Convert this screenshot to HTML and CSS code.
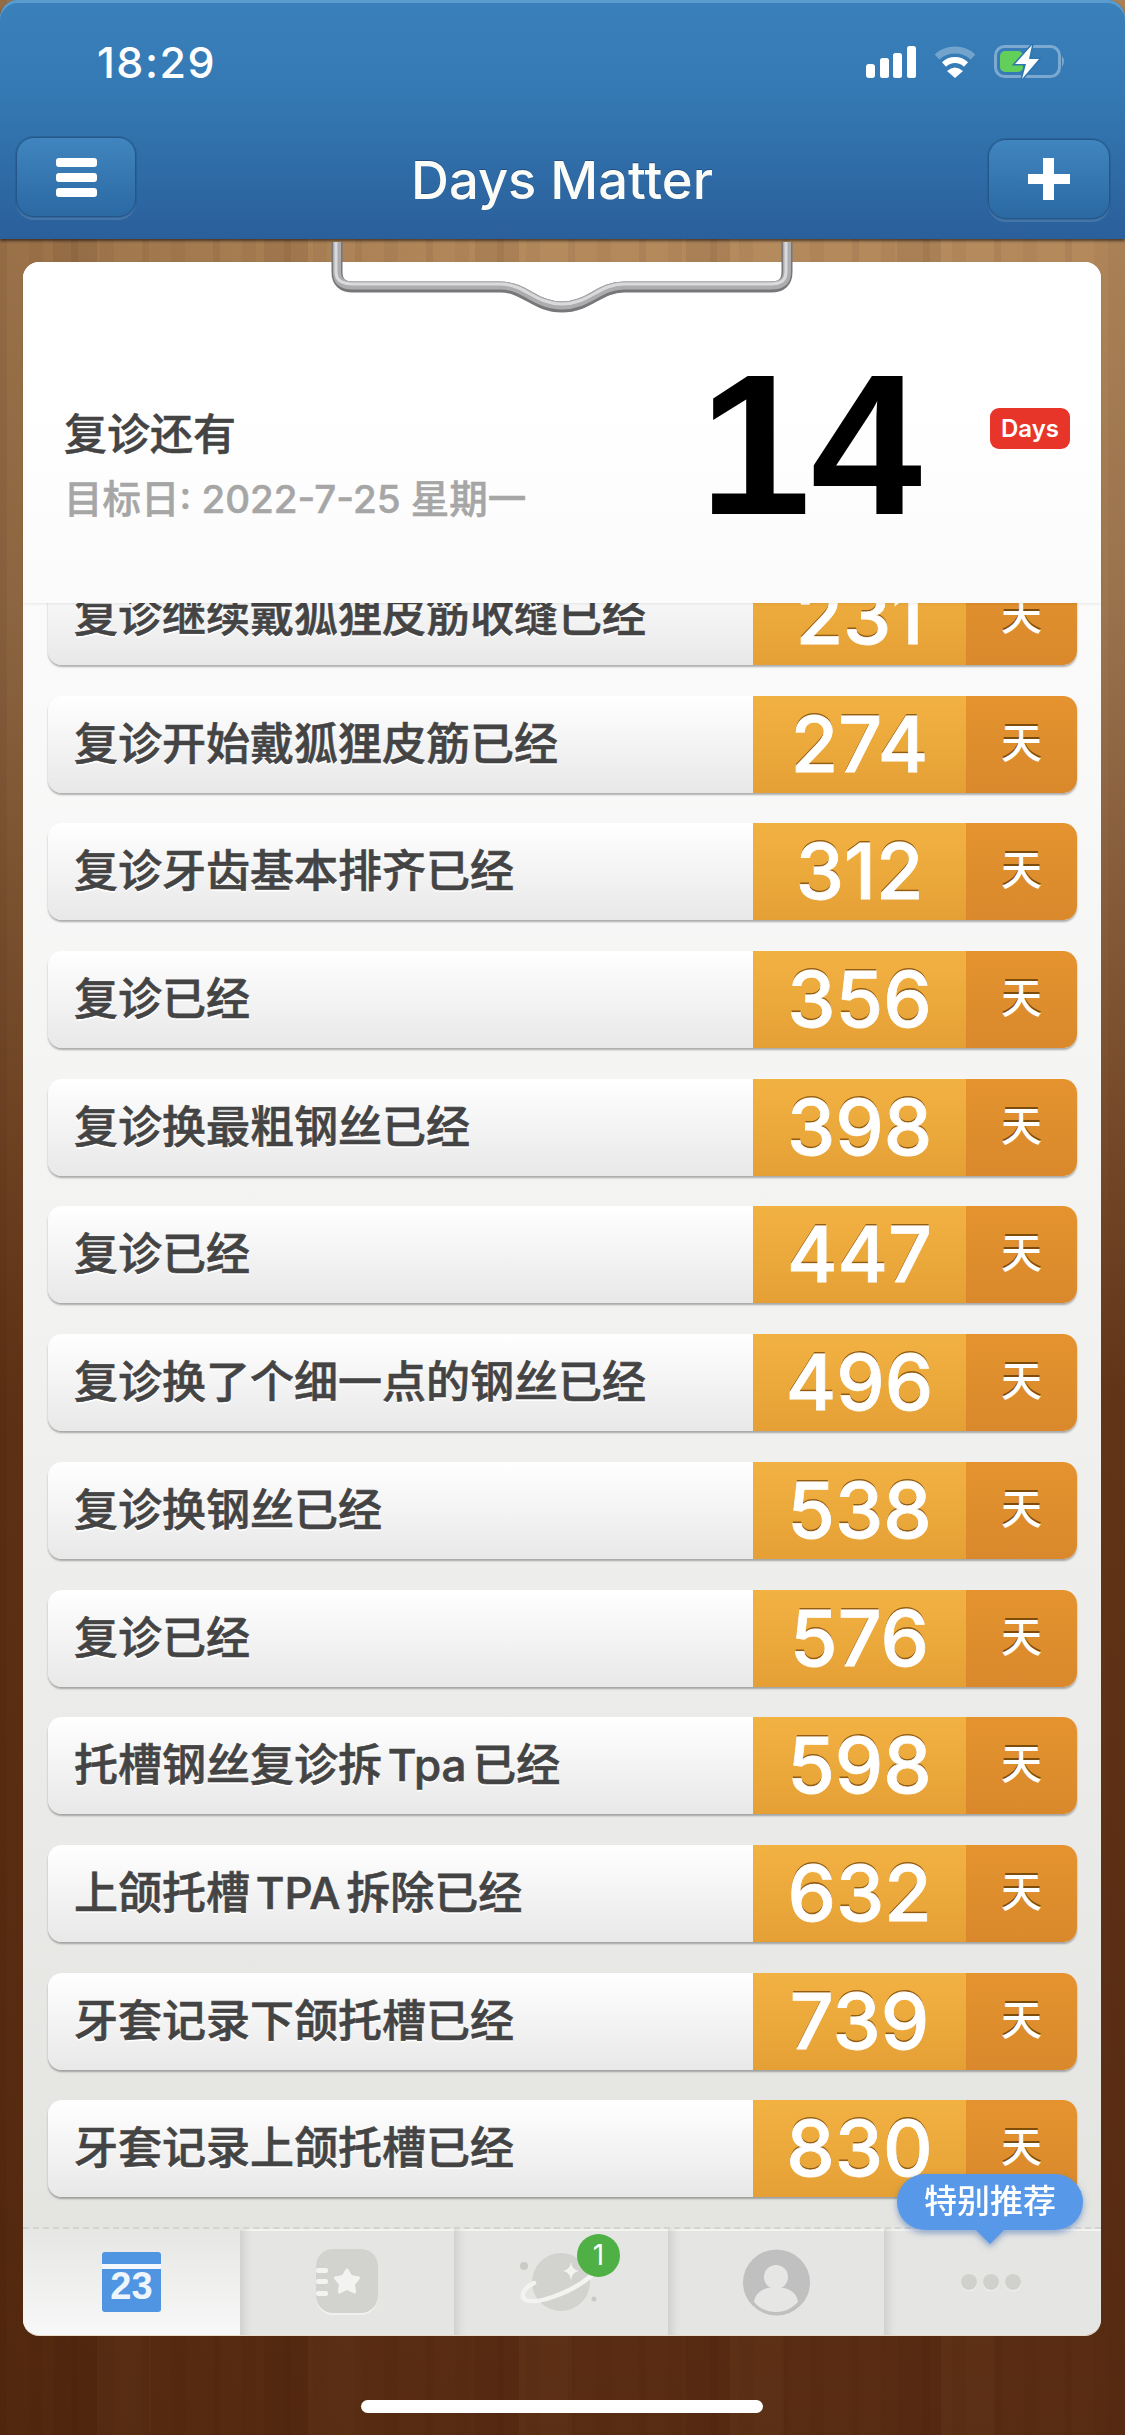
FILE: index.html
```html
<!DOCTYPE html>
<html>
<head>
<meta charset="utf-8">
<title>Days Matter</title>
<link rel="stylesheet" href="styles.css">
</head>
<body>
<div id="app">
  <div id="header">
    <div id="status-bar">
      <div id="clock">18:29</div>
      <div id="status-icons">
        <svg class="icon-signal" width="50" height="32" viewBox="0 0 50 32">
          <rect x="0" y="18" width="9" height="14" rx="3"/>
          <rect x="14" y="12" width="9" height="20" rx="2.5"/>
          <rect x="27" y="7" width="9" height="25" rx="2.5"/>
          <rect x="41" y="0" width="9" height="32" rx="2.5"/>
        </svg>
        <svg class="icon-wifi" width="42" height="32" viewBox="0 0 42 32">
          <path class="wifi-dim" d="M3 11 A27 27 0 0 1 39 11"/>
          <path class="wifi-mid" d="M10 18.5 A16 16 0 0 1 32 18.5"/>
          <path class="wifi-tip" d="M13 25 Q21 18 29 25 L21 32 Z"/>
        </svg>
        <svg class="icon-battery" width="72" height="36" viewBox="0 0 72 36">
          <rect class="batt-shell" x="1.5" y="2.5" width="64" height="30" rx="9"/>
          <path class="batt-cap" d="M68 12 Q72 17 68 23 Z"/>
          <rect class="batt-fill" x="6" y="7" width="23" height="21" rx="5"/>
          <path class="batt-bolt" d="M38 1 L21 20 L32 20 L28 35 L45 15 L35 15 Z"/>
        </svg>
      </div>
    </div>
    <div id="nav-bar">
      <div class="nav-btn">
        <div class="menu-icon"><span></span><span></span><span></span></div>
      </div>
      <div id="app-title">Days Matter</div>
      <div class="nav-btn nav-btn-add">
        <svg width="42" height="42" viewBox="0 0 42 42"><path class="plus" d="M15 0h11v16h16v10H26v16H15V26H0V16h15z"/></svg>
      </div>
    </div>
  </div>

  <div id="paper">
    <div id="hero">
      <div class="hero-text">
        <div class="hero-title">复诊还有</div>
        <div class="hero-date">目标日: 2022-7-25 星期一</div>
      </div>
      <div class="hero-count">14</div>
      <div class="hero-badge">Days</div>
    </div>

    <div id="list-wrap">
      <div id="event-list">
        <div class="event"><div class="event-name">复诊继续戴狐狸皮筋收缝已经</div><div class="event-num">231</div><div class="event-unit">天</div></div>
        <div class="event"><div class="event-name">复诊开始戴狐狸皮筋已经</div><div class="event-num">274</div><div class="event-unit">天</div></div>
        <div class="event"><div class="event-name">复诊牙齿基本排齐已经</div><div class="event-num">312</div><div class="event-unit">天</div></div>
        <div class="event"><div class="event-name">复诊已经</div><div class="event-num">356</div><div class="event-unit">天</div></div>
        <div class="event"><div class="event-name">复诊换最粗钢丝已经</div><div class="event-num">398</div><div class="event-unit">天</div></div>
        <div class="event"><div class="event-name">复诊已经</div><div class="event-num">447</div><div class="event-unit">天</div></div>
        <div class="event"><div class="event-name">复诊换了个细一点的钢丝已经</div><div class="event-num">496</div><div class="event-unit">天</div></div>
        <div class="event"><div class="event-name">复诊换钢丝已经</div><div class="event-num">538</div><div class="event-unit">天</div></div>
        <div class="event"><div class="event-name">复诊已经</div><div class="event-num">576</div><div class="event-unit">天</div></div>
        <div class="event"><div class="event-name">托槽钢丝复诊拆 Tpa 已经</div><div class="event-num">598</div><div class="event-unit">天</div></div>
        <div class="event"><div class="event-name">上颌托槽 TPA 拆除已经</div><div class="event-num">632</div><div class="event-unit">天</div></div>
        <div class="event"><div class="event-name">牙套记录下颌托槽已经</div><div class="event-num">739</div><div class="event-unit">天</div></div>
        <div class="event"><div class="event-name">牙套记录上颌托槽已经</div><div class="event-num">830</div><div class="event-unit">天</div></div>
      </div>
    </div>

    <div id="tab-bar">
      <div class="tab tab-active">
        <svg width="59" height="60" viewBox="0 0 59 60">
          <rect class="cal-body" x="0" y="0" width="59" height="60" rx="3"/>
          <rect class="cal-line" x="0" y="12" width="59" height="5"/>
          <text class="cal-day" x="29.5" y="47" text-anchor="middle">23</text>
        </svg>
      </div>
      <div class="tab">
        <svg width="62" height="66" viewBox="0 0 62 66">
          <rect class="icon-edge" x="0" y="1" width="62" height="65" rx="17"/>
          <rect class="icon-grey" x="0" y="0" width="62" height="64" rx="17"/>
          <rect class="icon-light" x="0" y="19" width="12" height="5" rx="2"/>
          <rect class="icon-light" x="0" y="30" width="12" height="5" rx="2"/>
          <rect class="icon-light" x="0" y="42" width="12" height="5" rx="2"/>
          <path class="note-star" d="M31 21 L35 27.5 L42.5 29 L37.5 35 L38.5 43 L31 39.5 L23.5 43 L24.5 35 L19.5 29 L27 27.5 Z"/>
        </svg>
      </div>
      <div class="tab">
        <svg class="planet" width="80" height="70" viewBox="0 0 80 70">
          <circle class="icon-grey" cx="40" cy="35" r="29"/>
          <circle class="icon-grey-dark" cx="3" cy="19" r="4"/>
          <circle class="icon-grey-dark" cx="73" cy="52" r="2.5"/>
          <path class="planet-ring" d="M13 36 C2 41 -1 50 5 53 C15 58 50 46 70 29"/>
          <path class="icon-light" d="M50 15 Q51 23 58 24 Q51 25 50 33 Q49 25 42 24 Q49 23 50 15 Z"/>
        </svg>
        <div class="tab-badge">1</div>
      </div>
      <div class="tab">
        <svg width="67" height="67" viewBox="0 0 67 67">
          <ellipse class="avatar-bg" cx="33.5" cy="33.5" rx="33.5" ry="33"/>
          <circle class="avatar-fg" cx="33" cy="28" r="12"/>
          <path class="avatar-fg" d="M11 53 C12 43 22 38 33 38 C44 38 54 43 55 53 C48 60 41 63 33 63 C25 63 17 60 11 53 Z"/>
        </svg>
      </div>
      <div class="tab">
        <div class="more-dots"><span></span><span></span><span></span></div>
      </div>
      <div id="promo-tip">特别推荐</div>
    </div>
  </div>

  <svg id="clip" width="480" height="74" viewBox="0 0 480 74">
    <path class="clip-shadow" d="M7 0 V30 Q7 45 23 45 H170 C195 45 205 65 232 65 C259 65 269 45 294 45 H441 Q457 45 457 30 V0"/>
    <path class="clip-metal" d="M7 0 V30 Q7 43.5 23 43.5 H170 C195 43.5 205 63.5 232 63.5 C259 63.5 269 43.5 294 43.5 H441 Q457 43.5 457 30 V0"/>
    <path class="clip-shine" d="M6 0 V30 Q6 42 23 42 H170 C195 42 205 62 232 62 C259 62 269 42 294 42 H441 Q456 42 456 30 V0"/>
  </svg>

  <div id="home-bar"></div>
</div>
</body>
</html>
```

FILE: styles.css
```css
html, body {
    margin: 0;
    padding: 0;
    background: #000;
}
#app {
    position: relative;
    width: 1125px;
    height: 2435px;
    overflow: hidden;
    display: flex;
    flex-direction: column;
    font-family: "Inter", "Noto Sans CJK SC", sans-serif;
    background:
        repeating-linear-gradient(90deg, rgba(40,10,0,.06) 0 7px, transparent 7px 29px, rgba(40,10,0,.04) 29px 43px, transparent 43px 71px),
        repeating-linear-gradient(90deg, transparent 0 53px, rgba(40,10,0,.07) 53px 97px, rgba(255,220,170,.02) 97px 151px, transparent 151px 211px),
        linear-gradient(90deg, rgba(60,25,0,.22), transparent 45%),
        linear-gradient(180deg, #b48a5c 240px, #a27a52 600px, #653719 1400px, #582c12 2435px);
}

/* top blue bar */
#header {
    position: relative;
    z-index: 2;
    height: 239px;
    flex: none;
    border-radius: 18px 18px 0 0;
    background: linear-gradient(180deg, #3a80ba 0, #3479b3 40%, #2a5f9b 100%);
    box-shadow: inset 0 3px 0 #5a9ccd, 0 2px 3px rgba(0,0,0,.55);
}
#status-bar {
    display: flex;
    justify-content: space-between;
    align-items: center;
    height: 44px;
    padding: 40px 59px 0 97px;
}
#clock {
    color: #fff;
    font-size: 43px;
    font-weight: 500;
    letter-spacing: 1.5px;
}
#status-icons {
    display: flex;
    align-items: center;
    gap: 18px;
}
.icon-signal { fill: #fff; }
.wifi-dim { fill: none; stroke: rgba(255,255,255,.3); stroke-width: 7; }
.wifi-mid { fill: none; stroke: #fff; stroke-width: 6; }
.wifi-tip { fill: #fff; }
.batt-shell { fill: none; stroke: rgba(255,255,255,.35); stroke-width: 3; }
.batt-cap { fill: rgba(255,255,255,.35); }
.batt-fill { fill: #62cf5b; }
.batt-bolt { fill: #fff; stroke: #2f76ae; stroke-width: 3; paint-order: stroke; }

#nav-bar {
    display: flex;
    align-items: center;
    padding: 51px 15px 0 16px;
}
.nav-btn {
    width: 120px;
    height: 80px;
    display: flex;
    align-items: center;
    justify-content: center;
    box-sizing: border-box;
    border: 1px solid #24568a;
    border-radius: 18px;
    background: linear-gradient(180deg, #4085bf, #2b69a3);
    box-shadow: 0 0 0 1px rgba(35,85,135,.45), 0 3px 0 rgba(255,255,255,.12);
}
.nav-btn-add {
    width: 122px;
    margin-top: 4px;
}
.menu-icon {
    display: flex;
    flex-direction: column;
    gap: 6px;
}
.menu-icon span {
    display: block;
    width: 41px;
    height: 9px;
    border-radius: 3px;
    background: #fff;
}
.plus { fill: #fff; }
#app-title {
    flex: 1;
    padding-top: 6px;
    text-align: center;
    color: #fbfbf7;
    font-size: 52.5px;
    font-weight: 500;
    text-shadow: 0 -1px 0 rgba(20,50,90,.5);
}

/* clipboard paper */
#paper {
    position: relative;
    margin: 23px 24px 0 23px;
    height: 2073px;
    flex: none;
    display: flex;
    flex-direction: column;
    border-radius: 16px;
    background: linear-gradient(180deg, #fbfbfb 300px, #f1f1f0 1100px, #e2e2df 100%);
    box-shadow: 0 1px 0 #eadbc8;
}
#hero {
    position: relative;
    z-index: 1;
    height: 341px;
    flex: none;
    display: flex;
    align-items: flex-start;
    box-sizing: border-box;
    padding: 0 31px 0 41px;
    border-radius: 16px 16px 0 0;
    background: linear-gradient(180deg, #fff 0, #fff 40%, #fbfbfb 100%);
    box-shadow: 0 1px 3px rgba(0,0,0,.08);
}
.hero-text {
    flex: 1;
    margin-top: 142px;
}
.hero-title {
    font-size: 43px;
    line-height: 60px;
    font-weight: 500;
    color: #444;
    -webkit-text-stroke: .5px #444;
}
.hero-date {
    margin-top: 10px;
    font-size: 38.5px;
    line-height: 50px;
    font-weight: 500;
    color: #a6a6a6;
    -webkit-text-stroke: .5px #a6a6a6;
}
.hero-count {
    margin-top: 70px;
    margin-right: 68px;
    font-family: "Liberation Sans", sans-serif;
    font-size: 200px;
    line-height: 226px;
    font-weight: 700;
    color: #000;
}
.hero-badge {
    width: 80px;
    height: 41px;
    margin-top: 146px;
    border-radius: 9px;
    background: #e8352a;
    color: #fff;
    font-size: 24px;
    font-weight: 600;
    line-height: 41px;
    text-align: center;
}

#list-wrap {
    flex: 1;
    overflow: hidden;
}
#event-list {
    display: flex;
    flex-direction: column;
    gap: 30.7px;
    margin: -35px 24px 0 25px;
}
.event {
    display: grid;
    grid-template-columns: 1fr 213px 111px;
    height: 97px;
    flex: none;
    overflow: hidden;
    border-radius: 14px;
    background: linear-gradient(180deg, #fff, #e8e8e8);
    box-shadow: 0 2px 2px rgba(0,0,0,.3);
}
.event-name {
    padding-left: 26px;
    font-size: 44px;
    font-weight: 500;
    line-height: 96px;
    color: #444;
    white-space: nowrap;
    word-spacing: -6px;
    -webkit-text-stroke: .6px #444;
    text-shadow: 0 2px 0 #fff;
}
.event-num {
    background: linear-gradient(180deg, #f2b242, #e5a035);
    color: #fff;
    font-size: 77px;
    font-weight: 500;
    line-height: 97px;
    text-align: center;
    -webkit-text-stroke: .8px #fff;
    text-shadow: 0 -2px 0 rgba(125,75,10,.8);
}
.event-unit {
    background: linear-gradient(180deg, #e4932f, #d9892b);
    color: #fff;
    font-size: 41px;
    font-weight: 500;
    line-height: 95px;
    text-align: center;
    text-shadow: 0 -2px 0 rgba(110,65,5,.85);
}

/* bottom tabs */
#tab-bar {
    position: relative;
    z-index: 1;
    height: 108px;
    flex: none;
    display: grid;
    grid-template-columns: 217px 214px 214px 216px 217px;
    box-sizing: border-box;
    border-top: 2px dashed #d3d3d0;
    box-shadow: inset 0 2px 0 #f3f3f1;
    border-radius: 0 0 16px 16px;
    background: #e5e5e3;
}
.tab {
    position: relative;
    display: flex;
    align-items: center;
    justify-content: center;
    box-shadow: inset 14px 0 12px -12px rgba(0,0,0,.14);
}
.tab:last-of-type { border-radius: 0 0 16px 0; }
.tab-active {
    border-radius: 0 0 0 16px;
    background: linear-gradient(180deg, #e6e6e4, #f8f8f8);
    box-shadow: none;
}
.cal-body { fill: #4f95e2; }
.cal-line { fill: #f4f8fd; }
.cal-day {
    fill: #eef5fd;
    font-family: "Liberation Sans", sans-serif;
    font-size: 38px;
    font-weight: 700;
}
.icon-grey { fill: #d2d2cf; }
.icon-grey-dark { fill: #c9c9c6; }
.icon-edge { fill: #f1f1ef; }
.icon-light { fill: #f3f3f1; }
.note-star { fill: #f3f3f1; stroke: #f3f3f1; stroke-width: 3; stroke-linejoin: round; }
.planet { overflow: visible; }
.planet-ring { fill: none; stroke: #f3f3f1; stroke-width: 4.5; stroke-linecap: round; }
.avatar-bg { fill: #c0c0c0; }
.avatar-fg { fill: #e6e6e5; }
.tab-badge {
    position: absolute;
    left: 123px;
    top: 5px;
    width: 43px;
    height: 43px;
    border-radius: 50%;
    background: #4fb045;
    color: #fff;
    font-size: 28px;
    line-height: 43px;
    text-align: center;
}
.more-dots {
    display: flex;
    gap: 6px;
    margin-right: 4px;
}
.more-dots span {
    display: block;
    width: 16px;
    height: 16px;
    border-radius: 50%;
    background: #d0d0cd;
    box-shadow: 0 1px 0 #f3f3f1;
}
#promo-tip {
    position: absolute;
    right: 18px;
    top: -55px;
    width: 186px;
    height: 56px;
    border-radius: 28px;
    background: #5898e8;
    color: #fff;
    font-size: 33px;
    font-weight: 500;
    line-height: 54px;
    text-align: center;
    filter: drop-shadow(0 3px 3px rgba(60,105,175,.55));
}
#promo-tip::after {
    content: "";
    position: absolute;
    left: 79px;
    top: 56px;
    border-left: 14px solid transparent;
    border-right: 14px solid transparent;
    border-top: 14px solid #5898e8;
}

/* metal clip over the paper */
#clip {
    position: absolute;
    left: 330px;
    top: 242px;
    z-index: 3;
}
.clip-shadow, .clip-metal, .clip-shine { fill: none; }
.clip-shadow { stroke: #77777a; stroke-width: 11; }
.clip-metal { stroke: #adadb0; stroke-width: 8; }
.clip-shine { stroke: #dadadc; stroke-width: 3; }

#home-bar {
    position: absolute;
    left: 361px;
    top: 2400px;
    width: 402px;
    height: 13px;
    border-radius: 7px;
    background: #fff;
}
```
